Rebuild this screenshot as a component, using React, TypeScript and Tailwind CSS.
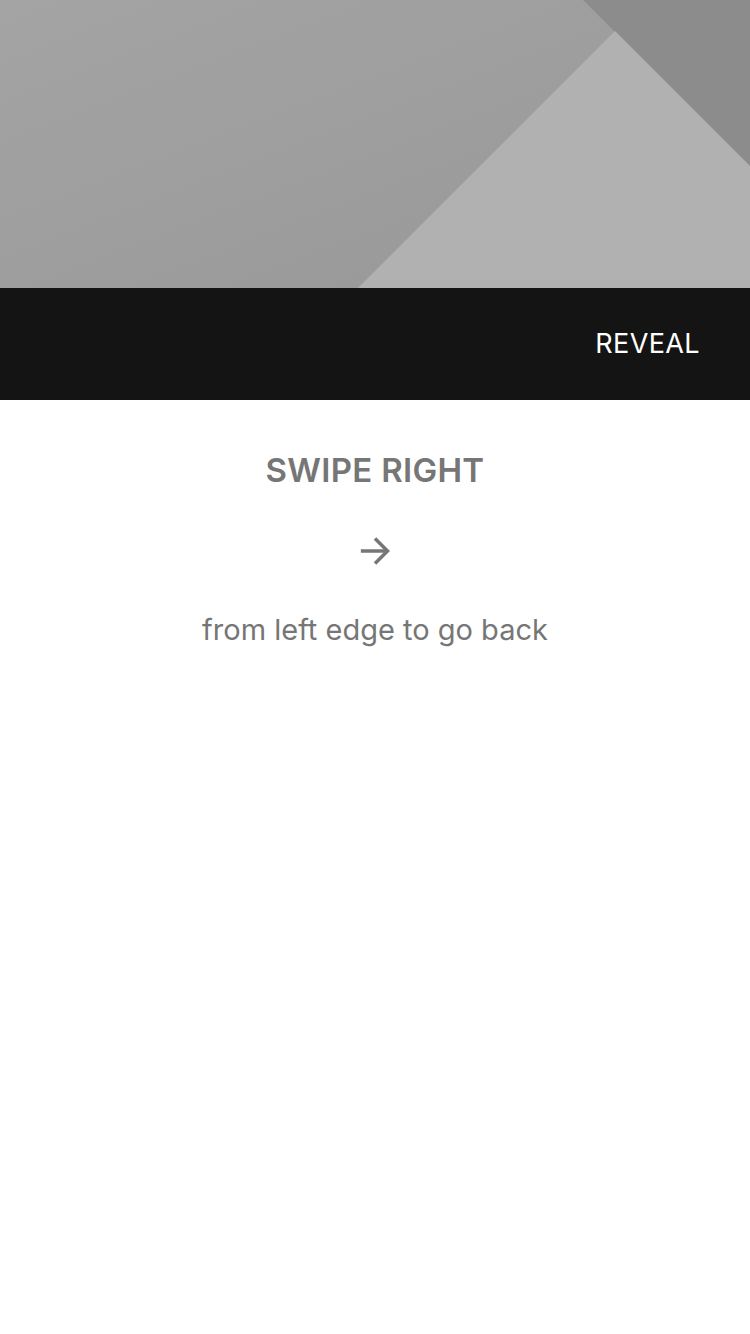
import React from 'react'

const HeroArt = () => {
    return (
        <svg className="block w-full h-[288px]" viewBox="0 0 750 288" preserveAspectRatio="none">
            <defs>
                <linearGradient id="base" x1="0" y1="0" x2="1" y2="1">
                    <stop offset="0" stopColor="#a4a4a4" />
                    <stop offset="1" stopColor="#979797" />
                </linearGradient>
            </defs>
            <rect x="0" y="0" width="750" height="288" fill="url(#base)" />
            <polygon points="583,0 750,0 750,167" fill="#8c8c8c" />
            <polygon points="358,288 615,31 750,166 750,288" fill="#b1b1b1" />
        </svg>
    )
}

const App = () => {
    return (
        <div className="min-h-[1334px] w-[750px] bg-white" style={{ fontFamily: 'Inter, "Noto Sans", sans-serif' }}>
            <HeroArt />
            <div className="h-[112px] bg-[#141414] flex items-center justify-end pr-[50px]">
                <span className="text-white text-[27px] tracking-[0.4px]">REVEAL</span>
            </div>
            <div className="flex flex-col items-center text-[#767676]">
                <h1 className="mt-[50px] text-[33px] font-semibold leading-[40px] tracking-[0.3px]">SWIPE RIGHT</h1>
                <svg className="mt-[41px]" width="40" height="40" viewBox="0 0 24 24" fill="none" stroke="#767676" strokeWidth="2.1" strokeLinecap="butt" strokeLinejoin="miter">
                    <path d="M3.5 12h16" />
                    <path d="M12 4.5l7.5 7.5-7.5 7.5" />
                </svg>
                <p className="mt-[39px] text-[29px] leading-[40px]">from left edge to go back</p>
            </div>
        </div>
    )
}

export default App
